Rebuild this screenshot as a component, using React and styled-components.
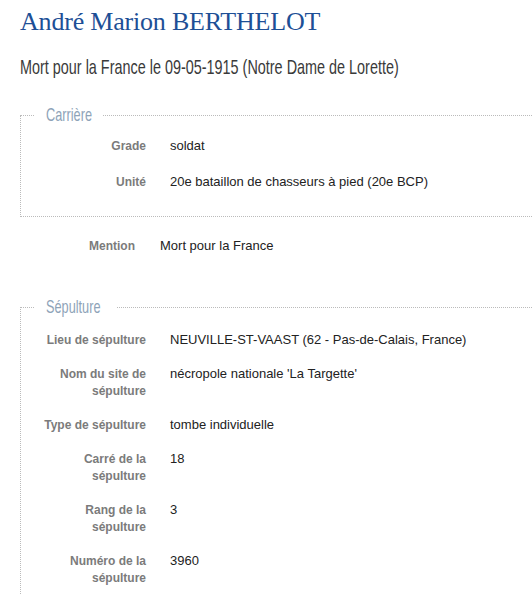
import styled, { createGlobalStyle } from "styled-components";

const GlobalStyle = createGlobalStyle`
  html, body {
    margin: 0;
    background: #fff;
    overflow: hidden;
  }
  body {
    font-family: "Liberation Sans", Arial, sans-serif;
  }
`;

const Page = styled.div`
  padding: 6px 0 0 20px;
`;

const Title = styled.h1`
  margin: 0;
  font-family: "Liberation Serif", "Times New Roman", serif;
  font-weight: normal;
  font-size: 26px;
  line-height: 32px;
  letter-spacing: -0.2px;
  color: #1d4f96;
`;

/* the site uses a condensed face we do not have: squeeze a sans instead */
const Condensed = styled.span`
  display: inline-block;
  white-space: nowrap;
  transform: scaleX(${(p) => p.$scale});
  transform-origin: left center;
`;

const Subtitle = styled.p`
  margin: 17px 0 0;
  overflow: hidden;
  font-size: 21px;
  line-height: 24px;
  color: #3a3a3a;
`;

const Section = styled.fieldset`
  margin: ${(p) => p.$top}px 0 0;
  padding: ${(p) => p.$pad}px 0 ${(p) => p.$bottom}px;
  border: 1px dotted #bbb;
  border-right: none;
  min-width: 0;
`;

const Legend = styled.legend`
  box-sizing: content-box;
  width: ${(p) => p.$w}px;
  margin-left: 14px;
  padding: 0 11px;
  overflow: hidden;
  font-size: 19px;
  color: #8ea3b8;
`;

const Rows = styled.dl`
  margin: 0;
  padding-left: ${(p) => p.$indent}px;
  display: grid;
  grid-template-columns: 105px 1fr;
  column-gap: ${(p) => p.$gap}px;
  row-gap: ${(p) => p.$rowGap}px;
`;

const Label = styled.dt`
  padding-top: 2px;
  text-align: right;
  font-size: 12px;
  font-weight: bold;
  line-height: 17px;
  color: #7b7b7b;
`;

const Value = styled.dd`
  margin: 0;
  font-size: 13px;
  line-height: 19px;
  color: #222;
`;

const Loose = styled.div`
  margin-top: 19px;
`;

const carriere = [
  ["Grade", "soldat"],
  ["Unité", "20e bataillon de chasseurs à pied (20e BCP)"],
];

const sepulture = [
  ["Lieu de sépulture", "NEUVILLE-ST-VAAST (62 - Pas-de-Calais, France)"],
  ["Nom du site de sépulture", "nécropole nationale 'La Targette'"],
  ["Type de sépulture", "tombe individuelle"],
  ["Carré de la sépulture", "18"],
  ["Rang de la sépulture", "3"],
  ["Numéro de la sépulture", "3960"],
];

function DataRows({ items, indent = 20, gap = 24, rowGap = 15 }) {
  return (
    <Rows $indent={indent} $gap={gap} $rowGap={rowGap}>
      {items.flatMap(([k, v]) => [
        <Label key={k}>{k}</Label>,
        <Value key={k + "-v"}>{v}</Value>,
      ])}
    </Rows>
  );
}

export default function App() {
  return (
    <Page>
      <GlobalStyle />
      <Title>André Marion BERTHELOT</Title>
      <Subtitle>
        <Condensed $scale={0.686}>
          Mort pour la France le 09-05-1915 (Notre Dame de Lorette)
        </Condensed>
      </Subtitle>

      <Section $top={25} $pad={10} $bottom={25}>
        <Legend $w={46}>
          <Condensed $scale={0.67}>Carrière</Condensed>
        </Legend>
        <DataRows items={carriere} rowGap={17} />
      </Section>

      <Loose>
        <DataRows items={[["Mention", "Mort pour la France"]]} indent={10} gap={25} />
      </Loose>

      <Section $top={41} $pad={12} $bottom={40}>
        <Legend $w={59}>
          <Condensed $scale={0.67}>Sépulture</Condensed>
        </Legend>
        <DataRows items={sepulture} />
      </Section>
    </Page>
  );
}
